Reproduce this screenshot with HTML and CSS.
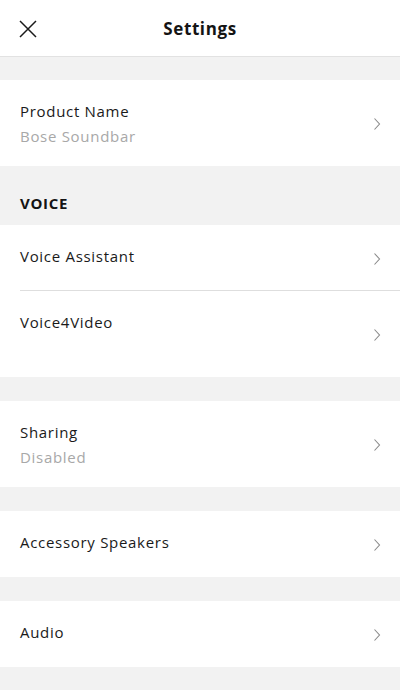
FILE: index.html
```html
<!DOCTYPE html>
<html>
<head>
<meta charset="utf-8">
<link rel="stylesheet" href="styles.css">
</head>
<body>
<div class="screen">
  <header class="topbar">
    <svg class="close" width="18" height="18" viewBox="0 0 18 18"><path d="M1 1 L17 17 M17 1 L1 17" stroke="#1a1a1a" stroke-width="1.5" fill="none"/></svg>
    <h1 class="title">Settings</h1>
  </header>
  <div class="gap first"></div>
  <div class="group">
    <div class="row">
      <div class="text"><div class="label">Product Name</div><div class="sub">Bose Soundbar</div></div>
      <svg class="chev" width="8" height="14" viewBox="0 0 8 14"><path d="M1.5 1.5 L6.5 7 L1.5 12.5" stroke="#8a8a8a" stroke-width="1.1" fill="none"/></svg>
    </div>
  </div>
  <div class="section">VOICE</div>
  <div class="group">
    <div class="row divided">
      <div class="text"><div class="label">Voice Assistant</div></div>
      <svg class="chev" width="8" height="14" viewBox="0 0 8 14"><path d="M1.5 1.5 L6.5 7 L1.5 12.5" stroke="#8a8a8a" stroke-width="1.1" fill="none"/></svg>
    </div>
    <div class="row">
      <div class="text"><div class="label">Voice4Video</div><div class="sub">&nbsp;</div></div>
      <svg class="chev" width="8" height="14" viewBox="0 0 8 14"><path d="M1.5 1.5 L6.5 7 L1.5 12.5" stroke="#8a8a8a" stroke-width="1.1" fill="none"/></svg>
    </div>
  </div>
  <div class="gap"></div>
  <div class="group">
    <div class="row">
      <div class="text"><div class="label">Sharing</div><div class="sub">Disabled</div></div>
      <svg class="chev" width="8" height="14" viewBox="0 0 8 14"><path d="M1.5 1.5 L6.5 7 L1.5 12.5" stroke="#8a8a8a" stroke-width="1.1" fill="none"/></svg>
    </div>
  </div>
  <div class="gap"></div>
  <div class="group">
    <div class="row">
      <div class="text"><div class="label">Accessory Speakers</div></div>
      <svg class="chev" width="8" height="14" viewBox="0 0 8 14"><path d="M1.5 1.5 L6.5 7 L1.5 12.5" stroke="#8a8a8a" stroke-width="1.1" fill="none"/></svg>
    </div>
  </div>
  <div class="gap"></div>
  <div class="group">
    <div class="row">
      <div class="text"><div class="label">Audio</div></div>
      <svg class="chev" width="8" height="14" viewBox="0 0 8 14"><path d="M1.5 1.5 L6.5 7 L1.5 12.5" stroke="#8a8a8a" stroke-width="1.1" fill="none"/></svg>
    </div>
  </div>
  <div class="rest"></div>
</div>
</body>
</html>
```
FILE: styles.css
```css
* { box-sizing: border-box; }
html, body { margin: 0; padding: 0; }
body {
  background: #f2f2f2;
  font-family: "Open Sans", "DejaVu Sans", sans-serif;
  color: #1a1a1a;
  width: 400px;
  height: 690px;
  overflow: hidden;
}
.screen { display: flex; flex-direction: column; }
.topbar {
  height: 57px;
  background: #fff;
  border-bottom: 1px solid #e2e2e2;
  display: flex;
  align-items: center;
  justify-content: center;
  position: relative;
}
.close { position: absolute; left: 19px; top: 20px; }
.title {
  margin: 0;
  font-size: 17px;
  font-weight: 700;
  letter-spacing: 0.6px;
  color: #141414;
}
.gap { height: 24px; }
.gap.first { height: 23px; }
.group { background: #fff; }
.row {
  display: flex;
  align-items: center;
  justify-content: space-between;
  min-height: 66px;
  padding: 19px 20px 17px 20px;
  position: relative;
}
.text { align-self: flex-start; }
.row.divided::after {
  content: "";
  position: absolute;
  left: 20px; right: 0; bottom: 0;
  height: 1px;
  background: #dedede;
}
.label { font-size: 15px; line-height: 24px; letter-spacing: 0.7px; }
.sub { font-size: 15px; line-height: 26px; color: #a8a8a8; letter-spacing: 0.7px; }
.chev { flex: none; margin-right: -1px; }
.section {
  height: 59px;
  padding: 27px 20px 0 20px;
  font-size: 15px;
  line-height: 20px;
  font-weight: 700;
  letter-spacing: 0.7px;
  color: #141414;
}
.rest { flex: 1; }
```
